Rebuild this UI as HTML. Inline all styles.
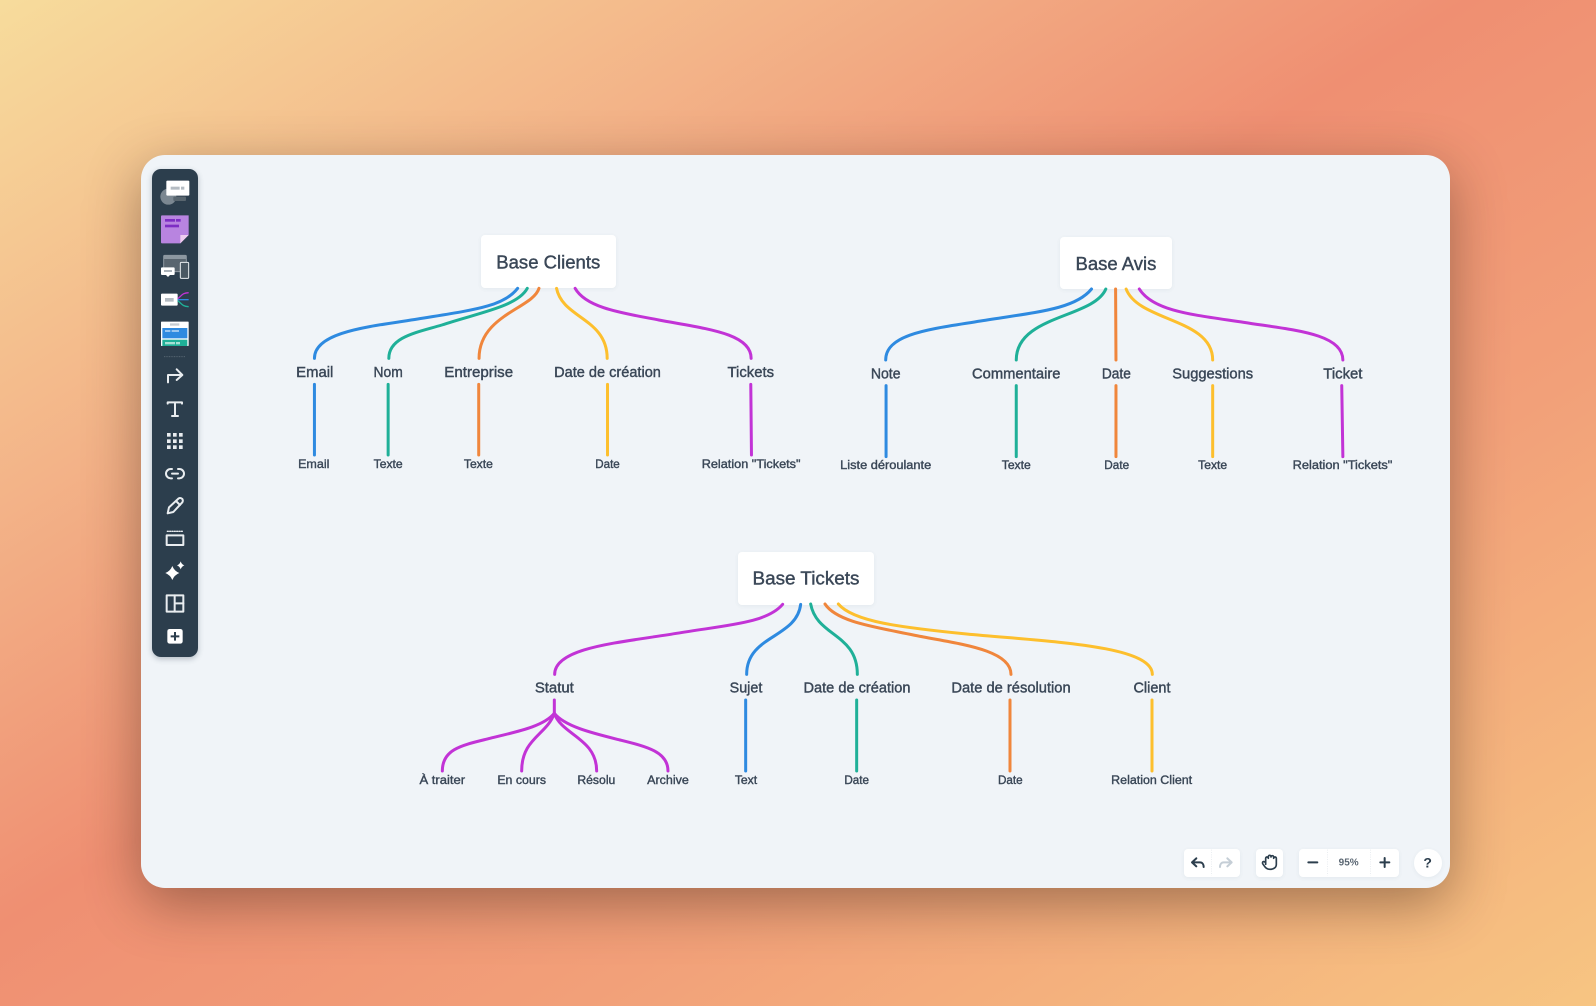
<!DOCTYPE html>
<html><head><meta charset="utf-8"><title>Base map</title>
<style>
html,body{margin:0;padding:0;width:1596px;height:1006px;overflow:hidden}
body{position:relative;background:linear-gradient(to bottom right,#f7dc9c 0%,#f3b388 25%,#ef8f72 46%,#f2a079 68%,#f7c582 100%);font-family:"Liberation Sans",sans-serif}
#panel{position:absolute;left:141px;top:155px;width:1309px;height:733px;border-radius:24px;background:#f0f4f8;box-shadow:0 16px 55px rgba(50,30,20,.42)}
#tb{position:absolute;left:151.5px;top:169px;width:46.5px;height:488px;border-radius:9px;background:#2c3e4d;box-shadow:0 2px 6px rgba(40,60,80,.3)}
.box{position:absolute;background:#fff;border-radius:4px;box-shadow:0 1px 4px rgba(60,80,100,.07)}
svg{position:absolute;left:0;top:0;filter:blur(.35px)}
.l{fill:none;stroke-width:3;stroke-linecap:round;vector-effect:non-scaling-stroke}
.l path{vector-effect:non-scaling-stroke}
.b{stroke:#2e8ae0}.g{stroke:#1fb098}.o{stroke:#f0863c}.y{stroke:#fdbf2d}.p{stroke:#c233d6}
text{fill:#3a4757;stroke:#3a4757;stroke-width:1.2px;text-anchor:middle;font-family:"Liberation Sans",sans-serif}
.t{font-size:55px}.m{font-size:43px}.s{font-size:37px}
.ic{fill:none;stroke:#e9edf0;stroke-width:6;stroke-linecap:round;stroke-linejoin:round}
</style></head>
<body>
<div id="panel"></div>
<div id="tb"></div>
<div class="box" style="left:481px;top:235px;width:134.5px;height:53px"></div>
<div class="box" style="left:1060px;top:237px;width:111.5px;height:52px"></div>
<div class="box" style="left:738px;top:552px;width:136px;height:52.5px"></div>
<div class="box" style="left:1184px;top:849px;width:56px;height:27.5px"></div>
<div class="box" style="left:1255.7px;top:849px;width:27.6px;height:27.5px"></div>
<div class="box" style="left:1299px;top:849px;width:99.7px;height:27.5px"></div>
<div class="box" style="left:1414px;top:849px;width:27.6px;height:27.5px;border-radius:50%"></div>

<svg width="1596" height="1006" viewBox="0 0 1596 1006" xmlns="http://www.w3.org/2000/svg">
<!-- tree 1 -->
<g transform="translate(280 225) scale(.34439 .33333)">
<g class="l">
<path class="b" d="M690 190C650 245 560 255 400 282C260 305 100 320 100 400M100 478V690"/>
<path class="g" d="M718 190C690 245 570 265 470 300C400 322 316 335 316 400M314 478V690"/>
<path class="o" d="M752 190C735 250 578 270 578 400M577 478V690"/>
<path class="y" d="M803 190C820 280 950 280 950 400M951 478V690"/>
<path class="p" d="M857 190C890 250 1000 265 1100 285C1240 312 1368 325 1368 400M1367 478L1369 690"/>
</g>
<text class="t" x="779" y="130" textLength="302" lengthAdjust="spacingAndGlyphs">Base Clients</text>
<text class="m" x="101" y="456" textLength="108" lengthAdjust="spacingAndGlyphs">Email</text>
<text class="m" x="314" y="456" textLength="85" lengthAdjust="spacingAndGlyphs">Nom</text>
<text class="m" x="577" y="456" textLength="200" lengthAdjust="spacingAndGlyphs">Entreprise</text>
<text class="m" x="951" y="456" textLength="310" lengthAdjust="spacingAndGlyphs">Date de création</text>
<text class="m" x="1367" y="456" textLength="135" lengthAdjust="spacingAndGlyphs">Tickets</text>
<text class="s" x="98" y="729" textLength="91" lengthAdjust="spacingAndGlyphs">Email</text>
<text class="s" x="314" y="729" textLength="84" lengthAdjust="spacingAndGlyphs">Texte</text>
<text class="s" x="576" y="729" textLength="84" lengthAdjust="spacingAndGlyphs">Texte</text>
<text class="s" x="951" y="729" textLength="71" lengthAdjust="spacingAndGlyphs">Date</text>
<text class="s" x="1368" y="729" textLength="287" lengthAdjust="spacingAndGlyphs">Relation "Tickets"</text>
</g>
<!-- tree 2 -->
<g transform="translate(830 225) scale(.37628 .33333)">
<g class="l">
<path class="b" d="M695 192C650 255 540 262 400 288C270 312 148 325 148 405M149 482V695"/>
<path class="g" d="M733 192C700 280 495 270 495 405M495 482V695"/>
<path class="o" d="M759 192L760 405M760 482V695"/>
<path class="y" d="M787 192C820 290 1017 280 1017 405M1017 482V695"/>
<path class="p" d="M822 192C860 260 970 270 1100 292C1230 315 1363 325 1363 405M1360 482L1363 695"/>
</g>
<text class="t" x="760" y="135" textLength="215" lengthAdjust="spacingAndGlyphs">Base Avis</text>
<text class="m" x="148" y="460" textLength="79" lengthAdjust="spacingAndGlyphs">Note</text>
<text class="m" x="495" y="460" textLength="235" lengthAdjust="spacingAndGlyphs">Commentaire</text>
<text class="m" x="761" y="460" textLength="77" lengthAdjust="spacingAndGlyphs">Date</text>
<text class="m" x="1017" y="460" textLength="215" lengthAdjust="spacingAndGlyphs">Suggestions</text>
<text class="m" x="1363" y="460" textLength="104" lengthAdjust="spacingAndGlyphs">Ticket</text>
<text class="s" x="148" y="732" textLength="242" lengthAdjust="spacingAndGlyphs">Liste déroulante</text>
<text class="s" x="495" y="732" textLength="77" lengthAdjust="spacingAndGlyphs">Texte</text>
<text class="s" x="762" y="732" textLength="66" lengthAdjust="spacingAndGlyphs">Date</text>
<text class="s" x="1017" y="732" textLength="77" lengthAdjust="spacingAndGlyphs">Texte</text>
<text class="s" x="1362" y="732" textLength="265" lengthAdjust="spacingAndGlyphs">Relation "Tickets"</text>
</g>
<!-- tree 3 left -->
<g transform="translate(410 545) scale(.33333)">
<g class="l">
<path class="p" d="M1118 178C1070 235 950 240 800 265C640 292 434 305 434 388"/>
<path class="p" d="M433 465V505C400 545 320 560 240 580C160 600 97 610 97 678"/>
<path class="p" d="M433 505C410 570 335 580 335 678"/>
<path class="p" d="M433 505C455 570 560 580 560 678"/>
<path class="p" d="M433 505C465 545 550 565 630 585C710 605 774 620 774 678"/>
<path class="b" d="M1172 178C1160 280 1010 270 1010 388M1007 465V678"/>
</g>
<text class="t" x="1188" y="118" textLength="321" lengthAdjust="spacingAndGlyphs">Base Tickets</text>
<text class="m" x="433" y="443" textLength="117" lengthAdjust="spacingAndGlyphs">Statut</text>
<text class="m" x="1008" y="443" textLength="98" lengthAdjust="spacingAndGlyphs">Sujet</text>
<text class="s" x="97" y="717" textLength="137" lengthAdjust="spacingAndGlyphs">À traiter</text>
<text class="s" x="335" y="717" textLength="146" lengthAdjust="spacingAndGlyphs">En cours</text>
<text class="s" x="559" y="717" textLength="114" lengthAdjust="spacingAndGlyphs">Résolu</text>
<text class="s" x="774" y="717" textLength="125" lengthAdjust="spacingAndGlyphs">Archive</text>
<text class="s" x="1008" y="717" textLength="67" lengthAdjust="spacingAndGlyphs">Text</text>
</g>
<!-- tree 3 right -->
<g transform="translate(780 590) scale(.33333)">
<g class="l">
<path class="g" d="M92 42C110 140 232 130 232 253M230 330V543"/>
<path class="o" d="M135 42C170 95 280 110 400 135C520 160 693 175 693 253M690 330V543"/>
<path class="y" d="M175 42C220 95 360 112 560 132C800 155 1117 165 1117 253M1116 330V543"/>
</g>
<text class="m" x="231" y="308" textLength="321" lengthAdjust="spacingAndGlyphs">Date de création</text>
<text class="m" x="693" y="308" textLength="358" lengthAdjust="spacingAndGlyphs">Date de résolution</text>
<text class="m" x="1116" y="308" textLength="111" lengthAdjust="spacingAndGlyphs">Client</text>
<text class="s" x="230" y="582" textLength="74" lengthAdjust="spacingAndGlyphs">Date</text>
<text class="s" x="691" y="582" textLength="74" lengthAdjust="spacingAndGlyphs">Date</text>
<text class="s" x="1115" y="582" textLength="243" lengthAdjust="spacingAndGlyphs">Relation Client</text>
</g>
<!-- toolbar upper -->
<g transform="translate(140 150) scale(.33333)">
<circle cx="85" cy="140" r="24" fill="#7b8791"/>
<rect x="100" y="140" width="38" height="13" rx="3" fill="#59666f"/>
<rect x="79" y="92" width="69" height="45" rx="3" fill="#fff"/>
<rect x="92" y="110" width="27" height="9" fill="#b4bbc2"/><rect x="123" y="110" width="10" height="9" fill="#b4bbc2"/>

<path d="M66 196H146V255L121 280H66a3 3 0 0 1-3-3V199a3 3 0 0 1 3-3z" fill="#b884e0"/>
<path d="M146 255L121 280V255z" fill="#efcdef"/>
<rect x="75" y="207" width="30" height="8" fill="#7d2dc4"/><rect x="108" y="207" width="14" height="8" fill="#7d2dc4"/>
<rect x="75" y="224" width="42" height="8" fill="#7d2dc4"/>

<rect x="71" y="316" width="68" height="49" rx="3" fill="#59656f" stroke="#8c97a0" stroke-width="3"/>
<rect x="71" y="316" width="68" height="11" fill="#8c97a0"/>
<rect x="121" y="337" width="25" height="48" rx="3" fill="#4a5863" stroke="#e9edf0" stroke-width="3"/>
<path d="M66 352H101a3 3 0 0 1 3 3V372a3 3 0 0 1-3 3H90L84 381L78 375H66a3 3 0 0 1-3-3V355a3 3 0 0 1 3-3z" fill="#fff"/>
<rect x="72" y="360" width="24" height="6" fill="#aab2b9"/>

<rect x="63" y="431" width="50" height="36" rx="3" fill="#fff"/>
<rect x="75" y="444" width="26" height="11" fill="#b4bbc2"/>
<path d="M113 446C125 438 125 429 146 428" fill="none" stroke="#c233d6" stroke-width="4"/>
<path d="M113 449H146" fill="none" stroke="#2e8ae0" stroke-width="4"/>
<path d="M113 452C125 460 125 469 146 470" fill="none" stroke="#1fb098" stroke-width="4"/>

<rect x="63" y="515" width="83" height="73" rx="2" fill="#fff"/>
<rect x="90" y="520" width="28" height="7" fill="#c6ccd2"/>
<rect x="67" y="534" width="75" height="31" fill="#2e8ae0"/>
<rect x="75" y="541" width="16" height="4" fill="#cfe3f7"/><rect x="95" y="541" width="22" height="4" fill="#cfe3f7"/>
<rect x="67" y="569" width="75" height="19" fill="#1fb098"/>
<rect x="75" y="576" width="30" height="7" fill="#a6e0d5"/><rect x="108" y="576" width="12" height="7" fill="#a6e0d5"/>

<path d="M72 620H137" stroke="#5b6a76" stroke-width="2.5" stroke-dasharray="3 2"/>
<g class="ic">
<path d="M84 697V675H124M110 658L127 675L110 690"/>
<path d="M83 761V757H126V761M105 757V798M96 798H114"/>
</g>
</g>
<!-- toolbar lower -->
<g transform="translate(140 400) scale(.33333)">
<g fill="#e9edf0">
<rect x="81" y="99" width="11" height="11"/><rect x="99" y="99" width="11" height="11"/><rect x="117" y="99" width="11" height="11"/>
<rect x="81" y="118" width="11" height="11"/><rect x="99" y="118" width="11" height="11"/><rect x="117" y="118" width="11" height="11"/>
<rect x="81" y="136" width="11" height="11"/><rect x="99" y="136" width="11" height="11"/><rect x="117" y="136" width="11" height="11"/>
</g>
<g class="ic">
<path d="M96 207H92a14 14 0 0 0 0 28H96M114 207H118a14 14 0 0 1 0 28H114M96 221H114"/>
<path d="M83 340L87 322L116 295Q122 292 127 297Q130 302 127 307L100 336zM108 303L120 315"/>
<rect x="80" y="406" width="50" height="29"/>
<path d="M82 394H128" stroke-dasharray="3 4" stroke-width="4"/>
<rect x="80" y="586" width="50" height="49"/>
<path d="M104 586V635M104 610H130"/>
</g>
<path d="M97 498Q103 513 118 519Q103 525 97 540Q91 525 76 519Q91 513 97 498z" fill="#fff"/>
<path d="M122 484Q125 493 133 496Q125 499 122 508Q119 499 111 496Q119 493 122 484z" fill="#fff"/>
<rect x="82" y="687" width="46" height="44" rx="7" fill="#fff"/>
<path d="M92 709H118M105 696V722" stroke="#2c3e4d" stroke-width="6"/>
</g>
<!-- bottom controls -->
<g transform="translate(1170 835) scale(.33333)">
<g fill="none" stroke="#dfe5ea" stroke-width="2" stroke-dasharray="3 4">
<path d="M125 44V122M472 44V122M601 44V122"/>
</g>
<g fill="none" stroke-linecap="round" stroke-linejoin="round" stroke-width="6">
<path d="M79 70L66 82L79 94M66 82H90C97 82 101 88 101 96" stroke="#2c3e4d"/>
<path d="M172 70L185 82L172 94M185 82H161C154 82 150 88 150 96" stroke="#c5ced6"/>
<path d="M287 88V70a4 4 0 0 1 8 0V65a4 4 0 0 1 8 0V66a4 4 0 0 1 8 0V70a4 4 0 0 1 8 0V88C319 98 310 103 300 103C290 103 286 98 278 86C276 79 283 77 287 84" stroke="#2c3e4d" stroke-width="5"/>
<path d="M415 82H442M631 82H658M644 69V96" stroke="#2c3e4d" stroke-width="6"/>
</g>
<text x="536" y="92" font-size="29" font-weight="bold" textLength="60" lengthAdjust="spacingAndGlyphs" style="fill:#5a6672;stroke:none">95%</text>
<text x="773" y="97" font-size="42" font-weight="bold" style="fill:#2c3e4d;stroke:none">?</text>
</g>
</svg>
</body></html>
